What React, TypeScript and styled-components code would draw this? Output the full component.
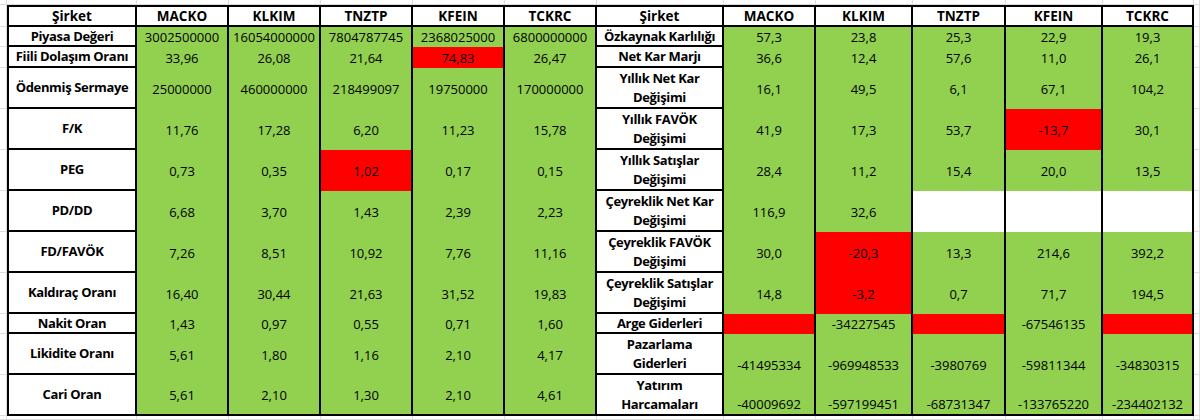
import React from "react";
import styled, { createGlobalStyle, css } from "styled-components";

const GlobalStyle = createGlobalStyle`
  html, body {
    margin: 0;
    padding: 0;
    background: #ffffff;
  }
  body {
    font-family: "Open Sans", "Noto Sans", "Liberation Sans", sans-serif;
    color: #000;
  }
`;

type Fill = "green" | "red" | "white";

const fills: Record<Fill, string> = {
  green: "#92d050",
  red: "#ff0000",
  white: "#ffffff",
};

const Sheet = styled.div`
  display: grid;
  width: 1200px;
  height: 420px;
  grid-template-columns: 7px 130px repeat(5, 92px) 127px 92px 97px 93px 97px 91px 1fr;
  grid-template-rows: 5px 22px 20px 21px repeat(6, 41px) 20px 41px 41px 1fr;
  overflow: hidden;
`;

const Blank = styled.div`
  box-sizing: border-box;
  border-right: 1px solid #dcdcdc;
  border-bottom: 1px solid #dcdcdc;
`;

const base = css<{ $first?: boolean }>`
  box-sizing: border-box;
  display: flex;
  flex-direction: column;
  align-items: center;
  text-align: center;
  white-space: nowrap;
  font-size: 13px;
  color: #000;
  border-right: 2px solid #000;
  border-left: ${(p) => (p.$first ? "2px solid #000" : "none")};
  overflow: hidden;
`;

const HeadCell = styled.div<{ $first?: boolean }>`
  ${base};
  justify-content: center;
  background: #fff;
  font-size: 13.5px;
  font-weight: 700;
  line-height: 18px;
  border-top: 2px solid #000;
  border-bottom: 2px solid #000;
`;

const LabelCell = styled.div<{ $first?: boolean }>`
  ${base};
  justify-content: center;
  background: #fff;
  font-weight: 700;
  letter-spacing: -0.35px;
  line-height: 19px;
  border-bottom: 2px solid #000;
`;

const ValueCell = styled.div<{ $fill: Fill; $bottom?: boolean; $last?: boolean }>`
  ${base};
  justify-content: ${(p) => (p.$bottom ? "flex-end" : "center")};
  background: ${(p) => fills[p.$fill]};
  font-weight: 400;
  line-height: 20px;
  border-bottom: ${(p) => (p.$last ? "2px solid #000" : "none")};
`;

type V = { t?: string; f?: Fill };
type Row = { label: string[]; values: V[]; bottom?: boolean };

const g = (t: string): V => ({ t, f: "green" });
const r = (t?: string): V => ({ t, f: "red" });
const w = (): V => ({ f: "white" });

const companies = ["MACKO", "KLKIM", "TNZTP", "KFEIN", "TCKRC"];

const leftRows: Row[] = [
  { label: ["Piyasa Değeri"], values: ["3002500000", "16054000000", "7804787745", "2368025000", "6800000000"].map(g) },
  { label: ["Fiili Dolaşım Oranı"], values: [g("33,96"), g("26,08"), g("21,64"), r("74,83"), g("26,47")] },
  { label: ["Ödenmiş Sermaye"], values: ["25000000", "460000000", "218499097", "19750000", "170000000"].map(g) },
  { label: ["F/K"], values: ["11,76", "17,28", "6,20", "11,23", "15,78"].map(g) },
  { label: ["PEG"], values: [g("0,73"), g("0,35"), r("1,02"), g("0,17"), g("0,15")] },
  { label: ["PD/DD"], values: ["6,68", "3,70", "1,43", "2,39", "2,23"].map(g) },
  { label: ["FD/FAVÖK"], values: ["7,26", "8,51", "10,92", "7,76", "11,16"].map(g) },
  { label: ["Kaldıraç Oranı"], values: ["16,40", "30,44", "21,63", "31,52", "19,83"].map(g) },
  { label: ["Nakit Oran"], values: ["1,43", "0,97", "0,55", "0,71", "1,60"].map(g) },
  { label: ["Likidite Oranı"], values: ["5,61", "1,80", "1,16", "2,10", "4,17"].map(g) },
  { label: ["Cari Oran"], values: ["5,61", "2,10", "1,30", "2,10", "4,61"].map(g) },
];

const rightRows: Row[] = [
  { label: ["Özkaynak Karlılığı"], values: ["57,3", "23,8", "25,3", "22,9", "19,3"].map(g) },
  { label: ["Net Kar Marjı"], values: ["36,6", "12,4", "57,6", "11,0", "26,1"].map(g) },
  { label: ["Yıllık Net Kar", "Değişimi"], values: ["16,1", "49,5", "6,1", "67,1", "104,2"].map(g) },
  { label: ["Yıllık FAVÖK", "Değişimi"], values: [g("41,9"), g("17,3"), g("53,7"), r("-13,7"), g("30,1")] },
  { label: ["Yıllık Satışlar", "Değişimi"], values: ["28,4", "11,2", "15,4", "20,0", "13,5"].map(g) },
  { label: ["Çeyreklik Net Kar", "Değişimi"], values: [g("116,9"), g("32,6"), w(), w(), w()] },
  { label: ["Çeyreklik FAVÖK", "Değişimi"], values: [g("30,0"), r("-20,3"), g("13,3"), g("214,6"), g("392,2")] },
  { label: ["Çeyreklik Satışlar", "Değişimi"], values: [g("14,8"), r("-3,2"), g("0,7"), g("71,7"), g("194,5")] },
  { label: ["Arge Giderleri"], values: [r(), g("-34227545"), r(), g("-67546135"), r()] },
  {
    label: ["Pazarlama", "Giderleri"],
    values: ["-41495334", "-969948533", "-3980769", "-59811344", "-34830315"].map(g),
    bottom: true,
  },
  {
    label: ["Yatırım", "Harcamaları"],
    values: ["-40009692", "-597199451", "-68731347", "-133765220", "-234402132"].map(g),
    bottom: true,
  },
];

const COLS = 14;

function BlankRow({ k }: { k: string }) {
  return (
    <>
      {Array.from({ length: COLS }, (_, i) => (
        <Blank key={`${k}-${i}`} />
      ))}
    </>
  );
}

function Label({ lines, first }: { lines: string[]; first?: boolean }) {
  return (
    <LabelCell $first={first}>
      {lines.map((l) => (
        <span key={l}>{l}</span>
      ))}
    </LabelCell>
  );
}

function Values({ row, last }: { row: Row; last: boolean }) {
  return (
    <>
      {row.values.map((v, i) => (
        <ValueCell key={i} $fill={v.f ?? "green"} $bottom={row.bottom} $last={last}>
          {v.t ?? ""}
        </ValueCell>
      ))}
    </>
  );
}

export default function App() {
  return (
    <>
      <GlobalStyle />
      <Sheet>
        <BlankRow k="top" />
        <Blank />
        <HeadCell $first>Şirket</HeadCell>
        {companies.map((c) => (
          <HeadCell key={`l-${c}`}>{c}</HeadCell>
        ))}
        <HeadCell>Şirket</HeadCell>
        {companies.map((c) => (
          <HeadCell key={`r-${c}`}>{c}</HeadCell>
        ))}
        <Blank />
        {leftRows.map((lr, i) => {
          const rr = rightRows[i];
          const last = i === leftRows.length - 1;
          return (
            <React.Fragment key={i}>
              <Blank />
              <Label lines={lr.label} first />
              <Values row={lr} last={last} />
              <Label lines={rr.label} />
              <Values row={rr} last={last} />
              <Blank />
            </React.Fragment>
          );
        })}
        <BlankRow k="bottom" />
      </Sheet>
    </>
  );
}
